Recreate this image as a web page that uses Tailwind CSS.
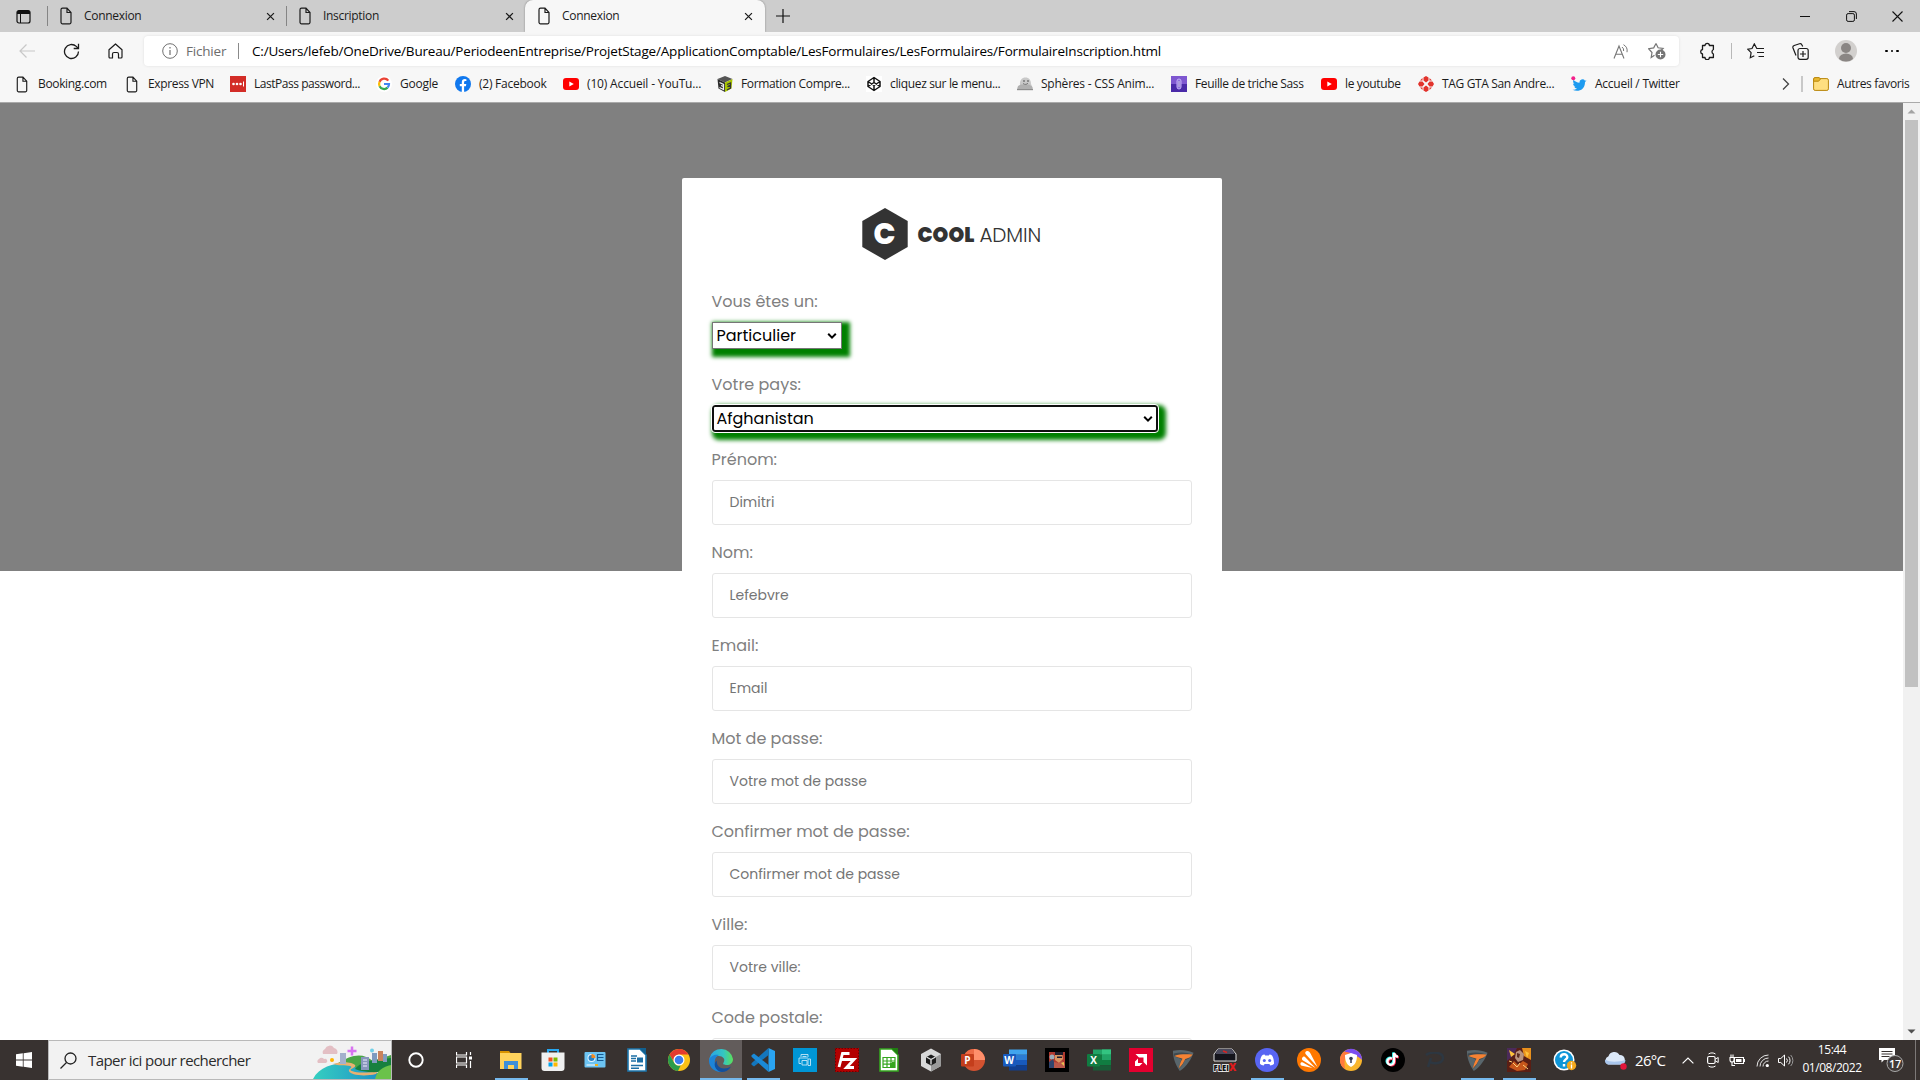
<!DOCTYPE html>
<html lang="fr">
<head>
<meta charset="utf-8">
<title>Connexion</title>
<script src="https://cdn.jsdelivr.net/npm/@tailwindcss/browser@4"></script>
</head>
<body class="w-[1920px] h-[1080px] overflow-hidden flex flex-col bg-white text-[12px] text-[#1b1b1b] font-['Segoe_UI','Open_Sans',sans-serif]">
<svg class="hidden">
  <defs>
    <symbol id="page" viewBox="0 0 12 18"><path d="M2.5 1.2H7l4 4.3v9.8a1.5 1.5 0 0 1-1.5 1.5h-7A1.5 1.5 0 0 1 1 15.300V2.700a1.500 1.500 0 0 1 1.500-1.500zM7 1.200v4.300h4" fill="none" stroke="#1b1b1b" stroke-width="1.2"/></symbol>
    <symbol id="close" viewBox="0 0 10 10"><path d="M1.200 1.200l7.600 7.600M8.800 1.200l-7.600 7.600" fill="none" stroke="#1b1b1b" stroke-width="1.400"/></symbol>
    <symbol id="yt" viewBox="0 0 16 12"><rect width="16" height="12" rx="3" fill="#f00"/><path d="M6.300 3.400v5.200L10.800 6z" fill="#fff"/></symbol>
    <symbol id="chev" viewBox="0 0 10 8"><path d="M1.200 1.800L5 5.600l3.800-3.800" fill="none" stroke="#000" stroke-width="2"/></symbol>
    <symbol id="wings" viewBox="0 0 24 24"><path d="M1 2c8-1.500 15-1 22.500 2C21 11 16 19 8.500 24 4 18 1 10 1 2z" fill="#59666c"/><path d="M2 5c7-2 14-1.500 20 1-2 4-4 5-8 6-1.500 4-3 6.500-6.500 9.500 1-4 1.500-7 3-10C8 10 5 9 2 8z" fill="#3f4a50"/><path d="M2.500 7.500c6-2 12-2 20-1.500-2 3-4.500 4-8 5-2 4-3.500 7-7 10 1-4.500 2-7.500 4-10.500-3-1.500-6-1.500-9-3z" fill="#f58233"/></symbol>
  </defs>
</svg>

<!-- Tab strip -->
<header class="h-8 bg-[#cdcdcd] flex items-end shrink-0">
  <div class="w-[47px] h-8 flex items-center justify-center">
    <svg class="w-[15px] h-[15px]" viewBox="0 0 15 15"><rect x="1" y="1.500" width="13" height="12.500" rx="2" fill="none" stroke="#111" stroke-width="1.200"/><path d="M1 3.500a2 2 0 0 1 2-2h9a2 2 0 0 1 2 2V5H1z" fill="#111"/><path d="M4.500 5v9" stroke="#111"/></svg>
  </div>
  <div class="w-[239px] h-8 flex items-center pl-3">
    <div class="w-px h-5 bg-[#858585] -ml-3 mr-3"></div>
    <svg class="w-3 h-[18px]"><use href="#page"/></svg>
    <span class="ml-3 flex-1 tracking-[-0.3px]">Connexion</span>
    <svg class="w-[9px] h-[9px] mr-[11px]"><use href="#close"/></svg>
  </div>
  <div class="w-[239px] h-8 flex items-center pl-3">
    <div class="w-px h-5 bg-[#858585] -ml-3 mr-3"></div>
    <svg class="w-3 h-[18px]"><use href="#page"/></svg>
    <span class="ml-3 flex-1 tracking-[-0.3px]">Inscription</span>
    <svg class="w-[9px] h-[9px] mr-[11px]"><use href="#close"/></svg>
  </div>
  <div class="w-[240px] h-8 flex items-center pl-[13px] bg-[#f7f7f7] rounded-t-lg shadow-[0_0_2px_rgba(0,0,0,.4)]">
    <svg class="w-3 h-[18px]"><use href="#page"/></svg>
    <span class="ml-3 flex-1 tracking-[-0.3px]">Connexion</span>
    <svg class="w-[9px] h-[9px] mr-3"><use href="#close"/></svg>
  </div>
  <div class="w-[35px] h-8 flex items-center justify-center">
    <svg class="w-[14px] h-[14px]" viewBox="0 0 14 14"><path d="M7 0v14M0 7h14" stroke="#111" stroke-width="1.200"/></svg>
  </div>
  <div class="flex-1"></div>
  <div class="w-[46px] h-8 flex items-center justify-center"><svg class="w-[10px] h-[10px]" viewBox="0 0 10 10"><path d="M0 5.500h10" stroke="#111"/></svg></div>
  <div class="w-[46px] h-8 flex items-center justify-center"><svg class="w-[11px] h-[11px]" viewBox="0 0 11 11"><rect x=".6" y="2.600" width="7.800" height="7.800" rx="1.500" fill="none" stroke="#111"/><path d="M3 .6h5a2.400 2.400 0 0 1 2.400 2.400v5" fill="none" stroke="#111"/></svg></div>
  <div class="w-[46px] h-8 flex items-center justify-center"><svg class="w-[11px] h-[11px]" viewBox="0 0 11 11"><path d="M.5.500l10 10M10.500.500l-10 10" stroke="#111" stroke-width="1.100"/></svg></div>
</header>

<!-- Toolbar -->
<nav class="relative h-[34px] pt-1 pl-[5px] bg-[#f7f7f7] flex items-center shrink-0">
  <div class="w-11 flex justify-center"><svg class="w-4 h-[14px]" viewBox="0 0 16 14"><path d="M16 7H1M7.500.500L1 7l6.500 6.500" fill="none" stroke="#c8c8c8" stroke-width="1.200"/></svg></div>
  <div class="w-11 flex justify-center"><svg class="w-[17px] h-[17px]" viewBox="0 0 17 17"><path d="M15.500 8.500a7 7 0 1 1-2.200-5.100l2 2M15.500.800v4.700h-4.800" fill="none" stroke="#1b1b1b" stroke-width="1.300"/></svg></div>
  <div class="w-11 flex justify-center"><svg class="w-[15px] h-4" viewBox="0 0 15 16"><path d="M1 6.800L7.500 1 14 6.800v7.200a1 1 0 0 1-1 1h-2.500v-4a1.500 1.500 0 0 0-1.500-1.500H6A1.500 1.500 0 0 0 4.500 11v4H2a1 1 0 0 1-1-1z" fill="none" stroke="#1b1b1b" stroke-width="1.200" stroke-linejoin="round"/></svg></div>
  <div class="ml-[7px] w-[1535px] h-[30px] bg-white rounded shadow-[0_0_3px_rgba(0,0,0,.1)] flex items-center pl-[18px]">
    <svg class="w-4 h-4" viewBox="0 0 16 16"><circle cx="8" cy="8" r="7.300" fill="none" stroke="#707070"/><path d="M8 7v5M8 4v1.500" stroke="#707070" stroke-width="1.200"/></svg>
    <span class="ml-2 w-[52px] text-[13.500px] text-[#6d6d6d] tracking-[-0.2px]">Fichier</span>
    <div class="w-px h-4 bg-[#8a8a8a]"></div>
    <span class="ml-[13px] flex-1 text-[13.500px] text-black whitespace-nowrap tracking-[-0.190px]">C:/Users/lefeb/OneDrive/Bureau/PeriodeenEntreprise/ProjetStage/ApplicationComptable/LesFormulaires/LesFormulaires/FormulaireInscription.html</span>
    <svg class="w-4 h-[15px] mr-[19px]" viewBox="0 0 16 15"><path d="M1 14.500L6 2l5 12.500M2.700 10.200h6.600" fill="none" stroke="#767676" stroke-width="1.100"/><path d="M9 3a4 4 0 0 1 1.600 4M10.500.700a7 7 0 0 1 3.500 7.500" fill="none" stroke="#767676"/></svg>
    <svg class="w-[18px] h-[18px] mr-[13px]" viewBox="0 0 18 18"><path d="M8 1.500l2.100 4.300 5 .7-3.500 3.300M6.500 13.200L3.200 15.500l.8-5L.6 6.700l5.100-.8L8 1.500" fill="none" stroke="#767676" stroke-width="1.200"/><circle cx="12.500" cy="12.500" r="5" fill="#767676"/><path d="M12.500 9.800v5.400M9.800 12.500h5.400" stroke="#fff" stroke-width="1.100"/></svg>
  </div>
  <div class="ml-1 w-12 flex justify-center"><svg class="w-[17px] h-[18px]" viewBox="0 0 17 18"><path d="M3.500 3.500H6a2.200 2.200 0 0 1 4.400 0h4v4a2.500 2.500 0 0 0 0 4.500v3.500h-4a2.200 2.200 0 0 1-4.400 0H3.500V12a2.300 2.300 0 0 1 0-4.500z" fill="none" stroke="#1b1b1b" stroke-width="1.300" stroke-linejoin="round"/></svg></div>
  <div class="w-px h-4 bg-[#b8b8b8]"></div>
  <div class="w-12 flex justify-center"><svg class="w-[18px] h-4" viewBox="0 0 18 16"><path d="M13 5.500H9.800L7.300.9 5 5.500.8 6.200l3.300 3.500-.8 5 4-2M10 5.500h7M10 9.500h7M11.500 13.500h5.500" fill="none" stroke="#1b1b1b" stroke-width="1.200"/></svg></div>
  <div class="w-10 mr-0.5 flex justify-center"><svg class="w-[17px] h-[17px]" viewBox="0 0 17 17"><rect x="6" y="5.500" width="10.200" height="10.800" rx="2" fill="#f7f7f7" stroke="#1b1b1b" stroke-width="1.200"/><path d="M11 8v6M8 11h6M4 12.500L1 5a2 2 0 0 1 1.200-2.500L7.500.800A2 2 0 0 1 10 2l.7 1.500" fill="none" stroke="#1b1b1b" stroke-width="1.200"/></svg></div>
  <div class="w-12 flex justify-center"><svg class="w-[22px] h-[22px]" viewBox="0 0 22 22"><circle cx="11" cy="11" r="11" fill="#d2d0ce"/><circle cx="11" cy="8" r="5" fill="#8a8684"/><path d="M4 19a7 5.500 0 0 1 14 0 11 11 0 0 1-14 0z" fill="#8a8684"/></svg></div>
  <div class="w-11 flex justify-center gap-[3px]"><i class="w-[2.500px] h-[2.500px] rounded-full bg-black"></i><i class="w-[2.500px] h-[2.500px] rounded-full bg-black"></i><i class="w-[2.500px] h-[2.500px] rounded-full bg-black"></i></div>
</nav>

<!-- Favourites bar -->
<nav class="h-[37px] border-b border-[#aaa] bg-[#f7f7f7] pl-[14px] flex items-center whitespace-nowrap shrink-0 tracking-[-0.35px]">
  <a class="w-[110px] flex items-center"><svg class="ml-0.5 mr-2.5 w-3 h-[17px]"><use href="#page"/></svg>Booking.com</a>
  <a class="w-[106px] flex items-center"><svg class="ml-0.5 mr-2.5 w-3 h-[17px]"><use href="#page"/></svg>Express VPN</a>
  <a class="w-[146px] flex items-center gap-2 tracking-[-0.460px]"><svg class="w-4 h-4" viewBox="0 0 16 16"><path fill="#d32d27" d="M0 0h16v16H0z"/><circle cx="3.500" cy="8" r="1.300" fill="#fff"/><circle cx="7" cy="8" r="1.300" fill="#fff"/><circle cx="10.500" cy="8" r="1.300" fill="#fff"/><path d="M13.500 5.500v5" stroke="#fff"/></svg>LastPass password...</a>
  <a class="w-[79px] flex items-center gap-2 tracking-[-0.250px]"><svg class="w-4 h-4" viewBox="0 0 16 16"><rect width="16" height="16" rx="8" fill="#fff"/><g fill="none" stroke-width="2.200"><path d="M12.300 4.600A5 5 0 0 0 3.600 5.800" stroke="#ea4335"/><path d="M3.600 5.800a5 5 0 0 0 0 4.400" stroke="#fbbc05"/><path d="M3.600 10.200a5 5 0 0 0 8 1.400" stroke="#34a853"/><path d="M11.600 11.600A5 5 0 0 0 13 8H8" stroke="#4285f4"/></g></svg>Google</a>
  <a class="w-[108px] flex items-center gap-2 tracking-[-0.250px]"><svg class="w-4 h-4" viewBox="0 0 16 16"><circle cx="8" cy="8" r="8" fill="#1078ee"/><path d="M6.800 16v-5.800H4.800V8h2V6.200c0-2 1.200-3.100 3-3.100l1.600.1v1.900h-1c-1 0-1.300.6-1.300 1.200V8h2.200l-.4 2.200H9.100V16z" fill="#fff"/></svg>(2) Facebook</a>
  <a class="w-[154px] flex items-center gap-2 tracking-[-0.160px]"><svg class="w-4 h-3"><use href="#yt"/></svg>(10) Accueil - YouTu...</a>
  <a class="w-[149px] flex items-center gap-2"><svg class="w-4 h-4" viewBox="0 0 16 16"><path d="M8 0l7.500 3L8 6.500.500 3z" fill="#555"/><path d="M.5 3L8 6.500V16L1.500 12.500z" fill="#2b2b2b"/><path d="M15.500 3L8 6.500V16l6.500-3.500z" fill="#a8c400"/><path d="M2.500 6.500L6.500 8.500v2L4 9.500M6.500 10.500v3L2.500 11.500" fill="none" stroke="#eee" stroke-width="1.300"/><path d="M10 8.500L13.500 7v2.200l-3 1.500 3-.5v2l-3.500 1.800" fill="none" stroke="#333" stroke-width="1.300"/></svg>Formation Compre...</a>
  <a class="w-[151px] flex items-center gap-2"><svg class="w-4 h-4 bg-white" viewBox="0 0 16 16"><path d="M8 1.500l6 4v5l-6 4-6-4v-5zM2 5.500l6 4 6-4M2 10.500l6-4 6 4M8 1.500v5M8 9.500v5" fill="none" stroke="#111" stroke-width="1.500" stroke-linejoin="round"/></svg>cliquez sur le menu...</a>
  <a class="w-[154px] flex items-center gap-2 tracking-[-0.220px]"><svg class="w-4 h-4" viewBox="0 0 16 16"><path d="M3 9C2.500 4 5 1.500 8.500 1.500S14 4 14 8l2 4.500H0z" fill="#c9c9c9"/><path d="M1 10l3-1.500h8l3 2 1 3.500H0z" fill="#b0b0b0"/><path d="M0 13h16v1.200H0z" fill="#8d8d8d"/><circle cx="7" cy="5" r="1" fill="#777"/><circle cx="11" cy="5" r="1" fill="#777"/><path d="M6 7.500c2 1.500 4 1 5-.5" stroke="#777" fill="none"/></svg>Sphères - CSS Anim...</a>
  <a class="w-[150px] flex items-center gap-2"><svg class="w-4 h-4" viewBox="0 0 16 16"><path fill="#7e57d0" d="M0 0h16v16H0z"/><path fill="#4a2aa8" d="M0 8h16v8H0z"/><rect x="6" y="3" width="4" height="10" rx="2" fill="#8d70dc" stroke="#c4b0f5"/><path d="M8 5v6" stroke="#ddd" stroke-width=".8"/></svg>Feuille de triche Sass</a>
  <a class="w-[97px] flex items-center gap-2"><svg class="w-4 h-3"><use href="#yt"/></svg>le youtube</a>
  <a class="w-[153px] flex items-center gap-2"><svg class="w-4 h-4" viewBox="0 0 16 16"><g fill="#e2332c"><path d="M8 0l2.500 1.500v3L8 6.500 5.500 4.500v-3zM8 16l2.500-1.500v-3L8 9.500l-2.500 2v3zM0 8l1.500-2.500h3L6.500 8l-2 2.500h-3zM16 8l-1.500-2.500h-3L9.500 8l2 2.500h3zM2 4.500L4.500 2v2.500zM14 4.500L11.500 2v2.500zM2 11.500L4.500 14v-2.500zM14 11.500L11.500 14v-2.500z"/></g></svg>TAG GTA San Andre...</a>
  <a class="flex-1 flex items-center gap-2 tracking-[-0.250px]"><svg class="w-4 h-4" viewBox="0 0 16 16"><path d="M15.500 4.200l-1.500.6a3 3 0 0 0-5.500 2C6 6.700 4 5.500 2.500 3.800c-.8 1.500-.3 3.200.9 4.100L2 7.500c.1 1.500 1.100 2.600 2.500 3H3.200c.4 1.200 1.500 1.900 2.800 2-1.400 1-3 1.300-4.500 1.200 5.500 3 12.500 0 12.500-7.500z" fill="#1d9bf0"/><circle cx="2.300" cy="2.300" r="2" fill="#f4218b"/></svg>Accueil / Twitter</a>
  <svg class="w-2 h-3 mr-[11px]" viewBox="0 0 8 12"><path d="M1 .5L6.500 6 1 11.500" fill="none" stroke="#444" stroke-width="1.300"/></svg>
  <div class="w-0.5 h-4 bg-[#c8c8c8] mr-2.5"></div>
  <svg class="w-4 h-[14px] mr-2" viewBox="0 0 16 14"><rect x=".6" y="1.600" width="14.800" height="11.800" rx="1.500" fill="#ffdf80" stroke="#b8860b"/><path d="M.6 4.200h5L7.500 2 6.300.600H2A1.400 1.400 0 0 0 .6 2z" fill="#e8b831" stroke="#b8860b"/></svg>
  <span class="w-[83px]">Autres favoris</span>
</nav>

<!-- Page -->
<div class="h-[937px] flex shrink-0">
  <main class="w-[1903px] overflow-hidden bg-[linear-gradient(#808080_468px,#fff_468px)] font-['Poppins','Inter',sans-serif] text-[#808080] text-[16px] leading-6">
    <form class="mx-auto mt-[75px] w-[540px] h-[900px] bg-white rounded-t-[2px] p-[30px]">
      <div class="h-[52px] mb-[30px] pl-[150px] flex items-center text-[#333]">
        <div class="relative w-[46px] h-[52px] flex items-center justify-center mr-[10px]">
          <svg class="absolute inset-0 w-[46px] h-[52px]" viewBox="0 0 46 52"><path d="M23 0l22.700 13v26L23 52 .3 39V13z" fill="#333"/></svg>
          <span class="relative text-white font-extrabold text-[29px]">C</span>
        </div>
        <span class="font-black text-[20px] tracking-[0.050px] pt-0.5">COOL</span>
        <span class="ml-[5px] text-[20px] tracking-[-0.1px] font-light pt-0.5">ADMIN</span>
      </div>
      <div>Vous êtes un:</div>
      <div class="mt-2 w-[130px] h-[27px] border border-[#767676] bg-white shadow-[4px_4px_4px_4px_green] pl-1 pr-1 flex items-center justify-between text-black"><span>Particulier</span><svg class="w-2.5 h-2"><use href="#chev"/></svg></div>
      <div class="mt-6">Votre pays:</div>
      <div class="mt-2 w-[446px] h-[27px] border-2 border-[#101010] rounded-[3px] outline outline-white bg-white shadow-[4px_4px_4px_4px_green] pl-[3px] pr-[3px] flex items-center justify-between text-black"><span>Afghanistan</span><svg class="w-2.5 h-2"><use href="#chev"/></svg></div>
      <div class="mt-4">Prénom:</div>
      <div class="mt-2 h-[45px] border border-[#e5e5e5] rounded-[3px] pl-[17px] pb-0.5 flex items-center text-[14px] text-[#757575]">Dimitri</div>
      <div class="mt-4">Nom:</div>
      <div class="mt-2 h-[45px] border border-[#e5e5e5] rounded-[3px] pl-[17px] pb-0.5 flex items-center text-[14px] text-[#757575]">Lefebvre</div>
      <div class="mt-4">Email:</div>
      <div class="mt-2 h-[45px] border border-[#e5e5e5] rounded-[3px] pl-[17px] pb-0.5 flex items-center text-[14px] text-[#757575]">Email</div>
      <div class="mt-4">Mot de passe:</div>
      <div class="mt-2 h-[45px] border border-[#e5e5e5] rounded-[3px] pl-[17px] pb-0.5 flex items-center text-[14px] text-[#757575]">Votre mot de passe</div>
      <div class="mt-4">Confirmer mot de passe:</div>
      <div class="mt-2 h-[45px] border border-[#e5e5e5] rounded-[3px] pl-[17px] pb-0.5 flex items-center text-[14px] text-[#757575]">Confirmer mot de passe</div>
      <div class="mt-4">Ville:</div>
      <div class="mt-2 h-[45px] border border-[#e5e5e5] rounded-[3px] pl-[17px] pb-0.5 flex items-center text-[14px] text-[#757575]">Votre ville:</div>
      <div class="mt-4">Code postale:</div>
      <div class="mt-2 h-[45px] border border-[#e5e5e5] rounded-[3px]"></div>
    </form>
  </main>
  <aside class="w-[17px] bg-[#f1f1f1] flex flex-col items-center">
    <svg class="w-[17px] h-[17px]" viewBox="0 0 17 17"><path d="M8.500 6.500l4 4h-8z" fill="#a3a3a3"/></svg>
    <div class="w-[13px] h-[567px] bg-[#c1c1c1]"></div>
    <div class="flex-1"></div>
    <svg class="w-[17px] h-[17px]" viewBox="0 0 17 17"><path d="M8.500 10.500l4-4h-8z" fill="#505050"/></svg>
  </aside>
</div>

<!-- Taskbar -->
<footer class="h-10 bg-[#383230] flex items-center shrink-0 text-white">
  <div class="w-12 flex justify-center"><svg class="w-4 h-4" viewBox="0 0 16 16"><path d="M0 2.300L6.800 1.300v6.300H0zM7.600 1.200L16 0v7.600H7.600zM0 8.400h6.800v6.300L0 13.700zM7.600 8.400H16V16l-8.400-1.200z" fill="#fff"/></svg></div>
  <div class="w-[344px] h-10 bg-[#f2f2f2] border border-[#b9b9b9] flex items-center pl-[11px] text-[#2b2b2b] text-[15px]">
    <svg class="w-[17px] h-[17px] mr-[11px]" viewBox="0 0 17 17"><circle cx="10.500" cy="6.500" r="5.500" fill="none" stroke="#222" stroke-width="1.300"/><path d="M6.500 10.500L.5 16.500" stroke="#222" stroke-width="1.300"/></svg>
    <span class="flex-1 tracking-[-0.580px] whitespace-nowrap">Taper ici pour rechercher</span>
    <svg class="w-[78px] h-[38px]" viewBox="0 0 78 38">
      <defs><linearGradient id="sea"><stop stop-color="#35cfc0"/><stop offset="1" stop-color="#1b86c9"/></linearGradient></defs>
      <path d="M22 24C40 12 50 12 60 20l18-6v16H30z" fill="#4aa545"/>
      <path d="M0 38C6 26 20 22 34 22c8 6 20 8 44 12v4z" fill="url(#sea)"/>
      <path d="M20 23c8-3 20-2 22 1s-8 4-3 6 16 2 26 0l-2 3c-12 3-26 1-27-3-1-2 5-4 1-5s-12 0-17-2z" fill="#eab071"/>
      <path d="M42 28c4-6 14-9 36-11v12c-12 3-26 3-36-1z" fill="#17803f"/>
      <path d="M62 38c2-9 8-12 16-14v14z" fill="#6bc24a"/>
      <path fill="#a4b0cc" d="M27 12h6v11h-6z"/><path fill="#8796bb" d="M48 16h8v13h-8z"/><path d="M50 19h4M50 22h4M50 25h4" stroke="#eef"/>
      <path fill="#c9825c" d="M65 10h5v10h-5z"/><path fill="#7f9bc0" d="M59 12h5v10h-5zM70 13h4v8h-4z"/>
      <path d="M10 13a4 4 0 0 1 2-5 5 5 0 0 1 9-1 4 4 0 0 1 3 6zM5 22a2.500 2.500 0 0 1 1-4 3 3 0 0 1 5 0 2 2 0 0 1 2 4z" fill="#e3bfc4"/>
      <circle cx="19" cy="19" r="2" fill="#ffb300"/><circle cx="59" cy="9.500" r="2" fill="#6fd0e8"/><path d="M39 5.500v9M34.500 10h9" stroke="#d873f0" stroke-width="2.500"/>
    </svg>
  </div>
  <div class="w-12 flex justify-center"><svg class="w-4 h-4" viewBox="0 0 16 16"><circle cx="8" cy="8" r="6.700" fill="none" stroke="#fff" stroke-width="1.900"/></svg></div>
  <div class="w-12 flex justify-center"><svg class="w-4 h-4" viewBox="0 0 16 16"><path d="M.5 0v3h10V0M.5 16v-3h10v3M.5 5h10v6H.5zM14.500 0v3M14.500 9v7" fill="none" stroke="#fff" stroke-width="1.200"/><path fill="#fff" d="M13 4.500h3v3h-3z"/></svg></div>
  <div class="flex h-10 items-stretch ml-0.5">
    <div class="w-[42px] relative flex items-center justify-center"><svg class="w-6 h-6" viewBox="0 0 24 24"><path d="M1 3h9l1.500 2H1z" fill="#d99400"/><path d="M1 5h21.500v16H1z" fill="#ffd35c"/><path d="M5 21v-8h14v8h-4v-4H9v4z" fill="#3e8fd8"/></svg><i class="absolute bottom-0 w-[33px] h-0.5 bg-[#76b9ed]"></i></div>
    <div class="w-[42px] flex items-center justify-center"><svg class="w-6 h-6" viewBox="0 0 24 24"><path d="M7 5V2h10v3" fill="none" stroke="#27a7f0" stroke-width="2"/><path d="M.5 4.500h23V20a3 3 0 0 1-3 3h-17a3 3 0 0 1-3-3z" fill="#f0f0f0"/><path fill="#f25022" d="M7.500 9.500h4v4h-4z"/><path fill="#7fba00" d="M12.500 9.500h4v4h-4z"/><path fill="#00a4ef" d="M7.500 14.500h4v4h-4z"/><path fill="#ffb900" d="M12.500 14.500h4v4h-4z"/></svg></div>
    <div class="w-[42px] flex items-center justify-center"><svg class="w-6 h-6" viewBox="0 0 24 24"><rect x="1.500" y="4" width="21" height="15.500" rx="1" fill="#6cc4f3"/><circle cx="8.500" cy="10" r="4" fill="#e9f6ff"/><circle cx="8.500" cy="10" r="3" fill="#2b83c6"/><path d="M8.500 10V6a4 4 0 0 1 4 4z" fill="#f08a24"/><path d="M14.500 6.500h6M14.500 9.500h6M14.500 12.500h6M14.500 6v7" stroke="#155a92" stroke-width="1.200"/><path d="M3.500 17h9" stroke="#fff"/><path d="M12 17h3" stroke="#f5b21a" stroke-width="2"/></svg></div>
    <div class="w-[42px] flex items-center justify-center"><svg class="w-6 h-6" viewBox="0 0 24 24"><path d="M3 1h12l6 6v16H3z" fill="#fff" stroke="#1d77ad" stroke-width="1.600"/><path d="M14 0h7v7z" fill="#12608f"/><path d="M6 8h6M6 10.500h5M6 13h5M6 17.500h12M6 20.200h8" stroke="#1d6fa5" stroke-width="1.500"/><path fill="#1d6fa5" d="M12 9.500h6v5h-6z"/></svg></div>
    <div class="w-[42px] flex items-center justify-center"><svg class="w-6 h-6" viewBox="0 0 24 24"><circle cx="12" cy="12" r="11" fill="#fbc116"/><path d="M2.500 6.500a11 11 0 0 1 19-.1H12A5.500 5.500 0 0 0 7 14z" fill="#e33b2e"/><path d="M2.500 6.500L7.300 15a5.500 5.500 0 0 0 6.500 2.200L11 23A11 11 0 0 1 2.500 6.500z" fill="#2a9c4b"/><circle cx="12" cy="12" r="5.500" fill="#fff"/><circle cx="12" cy="12" r="4.300" fill="#3a7cec"/></svg></div>
    <div class="w-[42px] bg-[#625c5b] relative flex items-center justify-center"><svg class="w-6 h-6" viewBox="0 0 24 24"><defs><linearGradient id="eg" x1="0" x2="1"><stop stop-color="#2aa4e8"/><stop offset=".6" stop-color="#35c6c0"/><stop offset="1" stop-color="#5be05a"/></linearGradient></defs><path d="M.5 10A12 12 0 0 1 24 11c0 4-3 6-6 6s-4.500-1-3.500-2.300C17 11 13.500 8 10 8S2 10 .5 14z" fill="url(#eg)"/><path d="M0 12c1-4 6-6 10-5-3 1-5 5-4 9s4 7 8 8C6 25-.5 19 0 12z" fill="#1d84d8"/><path d="M8 12.500c-1 4 2 8 7 8 3 0 5-1 7-2-2.500 4.500-7 6-11 5.300-5-2-7.500-8-3-11.300z" fill="#134f9c"/></svg><i class="absolute bottom-0 w-[42px] h-0.5 bg-[#76b9ed]"></i></div>
    <div class="w-[42px] relative flex items-center justify-center"><svg class="w-6 h-6" viewBox="0 0 24 24"><path d="M17.500 0v24L24 21V3z" fill="#2aa4f2"/><path d="M17.500 0v7L3 18.500.500 16.800v-1.600z" fill="#1376bd"/><path d="M17.500 24v-7L3 5.500.500 7.200v1.600z" fill="#1a8ad8"/></svg><i class="absolute bottom-0 w-[33px] h-0.5 bg-[#76b9ed]"></i></div>
    <div class="w-[42px] flex items-center justify-center"><svg class="w-6 h-6" viewBox="0 0 24 24"><path fill="#0096d6" d="M0 0h24v24H0z"/><path d="M8 9V6.500h7V9M8 15.500H6v-5.500h9M9 12.500h5v4.500H9zM15 11h2.500v6.500H15zM9.500 8.500h4" fill="none" stroke="#c4e8f8" stroke-width=".9"/></svg></div>
    <div class="w-[42px] flex items-center justify-center"><svg class="w-6 h-6" viewBox="0 0 24 24"><path fill="#b30000" d="M0 0h24v24H0z"/><path d="M.5.500h23v23H.5z" fill="none" stroke="#6d0000" stroke-dasharray="1.500"/><path d="M4 19L7.500 5.500h7M5.500 11.500h7M12 11.500h7l-7.500 8h7.500" fill="none" stroke="#fff" stroke-width="2.800"/></svg></div>
    <div class="w-[42px] flex items-center justify-center"><svg class="w-6 h-6" viewBox="0 0 24 24"><path d="M3 1h12l6 6v16H3z" fill="#fff" stroke="#35a61f" stroke-width="1.600"/><path d="M14 0h7v7z" fill="#1f7d10"/><path d="M6 9.500h12v10H6zM6 13h12M6 16.200h12M10 9.500v10M14 9.500v10" fill="none" stroke="#35a61f" stroke-width="1.200"/><path d="M13 19v-4h2v-1h3v5z" fill="#35a61f"/></svg></div>
    <div class="w-[42px] flex items-center justify-center"><svg class="w-6 h-6" viewBox="0 0 24 24"><path d="M12 .5l10 5.500v12l-10 5.500L2 18V6z" fill="#d8d8d8"/><path d="M12 12l10-6v12l-10 5.500z" fill="#9a9a9a"/><path d="M12 6.500l5 2.800v5.400l-5 2.800-5-2.800V9.300z" fill="#1c1c1c"/><path d="M12 11.500v5M12 11.500L7.500 9M12 11.500L16.500 9" stroke="#e5e5e5" stroke-width="1.300"/></svg></div>
    <div class="w-[42px] flex items-center justify-center"><svg class="w-6 h-6" viewBox="0 0 24 24"><circle cx="13" cy="12" r="11" fill="#d35230"/><path d="M13 1a11 11 0 0 1 11 11H13z" fill="#ff8f6b"/><path d="M13 1v11H2A11 11 0 0 1 13 1z" fill="#ed6c47"/><rect y="6" width="13" height="12.500" rx="1" fill="#c43e1c"/><text x="3.300" y="16" font-size="10" font-weight="700" fill="#fff">P</text></svg></div>
    <div class="w-[42px] flex items-center justify-center"><svg class="w-6 h-6" viewBox="0 0 24 24"><path fill="#41a5ee" d="M6 1.500h18v5.300H6z"/><path fill="#2b7cd3" d="M6 6.800h18v5.200H6z"/><path fill="#185abd" d="M6 12h18v5.200H6z"/><path fill="#103f91" d="M6 17.200h18v5.300H6z"/><rect y="6" width="13" height="12.500" rx="1" fill="#185abd"/><text x="1.300" y="16" font-size="10" font-weight="700" fill="#fff">W</text></svg></div>
    <div class="w-[42px] flex items-center justify-center"><svg class="w-6 h-6" viewBox="0 0 24 24"><path d="M0 0h24v24H0z"/><path fill="#b03a30" d="M4 4h16v16H4z"/><path d="M10 5h7l1 6-4 4-4-3z" fill="#d99561"/><path d="M10 4h8v3h-8zM12 8.500h5v1.500h-5z" fill="#1c1c2c"/><circle cx="7" cy="9" r="2.500" fill="#9cadb9"/><path d="M4 14l4-3 3 9H4z" fill="#31456e"/><path d="M9 14l5 1 3-2 3 3v4H9z" fill="#b9584a"/><path d="M16 15l3-1v4z" fill="#e8c050"/></svg></div>
    <div class="w-[42px] flex items-center justify-center"><svg class="w-6 h-6" viewBox="0 0 24 24"><path fill="#21a366" d="M6 1.500h18v5.300H6z"/><path fill="#33c481" d="M15 1.500h9v5.300h-9z"/><path fill="#107c41" d="M6 6.800h18v10.400H6z"/><path fill="#21a366" d="M15 6.800h9v5.200h-9z"/><path fill="#185c37" d="M6 17.200h18v5.300H6z"/><rect y="6" width="13" height="12.500" rx="1" fill="#107c41"/><text x="3.200" y="16" font-size="10" font-weight="700" fill="#fff">X</text></svg></div>
    <div class="w-[42px] flex items-center justify-center"><svg class="w-6 h-6" viewBox="0 0 24 24"><path fill="#e4002f" d="M0 0h24v24H0z"/><path d="M6.500 6H18v11.500L14.500 14V9.500H10zM9 10.500v4.500h4.500L10.500 18H6v-4.500z" fill="#fff"/></svg></div>
    <div class="w-[42px] flex items-center justify-center"><svg class="w-[22px] h-[22px]"><use href="#wings"/></svg></div>
    <div class="w-[42px] flex items-center justify-center"><svg class="w-[26px] h-8" viewBox="0 0 26 32"><path d="M6 5h14l4 5v7H2v-7z" fill="#15151c" stroke="#ddd"/><path d="M6 5h14l2.500 5h-19z" fill="#4a4a5c"/><path d="M11 7l4 1.500" stroke="#d22" stroke-width="1.500"/><text x="1.500" y="26.500" font-size="9" font-weight="800" textLength="15.500" lengthAdjust="spacingAndGlyphs" fill="#111" stroke="#fff" stroke-width="1.600" paint-order="stroke">FLEI</text><text x="17" y="26.500" font-size="10" font-weight="800" fill="#e21b1b">X</text></svg></div>
    <div class="w-[42px] relative flex items-center justify-center"><svg class="w-6 h-6" viewBox="0 0 24 24"><circle cx="12" cy="12" r="12" fill="#5865f2"/><path d="M8 6.800l1.600-.4.5 1h3.800l.5-1 1.600.4c1.800.8 3.200 5.200 3 9-1 1-2.300 1.500-3.700 1.700l-.9-1.500H9.600l-.9 1.500C7.300 17.300 6 16.800 5 15.800c-.2-3.800 1.200-8.200 3-9z" fill="#fff"/><circle cx="9.300" cy="12.500" r="1.500" fill="#5865f2"/><circle cx="14.700" cy="12.500" r="1.500" fill="#5865f2"/></svg><i class="absolute bottom-0 w-[33px] h-0.5 bg-[#76b9ed]"></i></div>
    <div class="w-[42px] flex items-center justify-center"><svg class="w-6 h-6" viewBox="0 0 24 24"><circle cx="12" cy="12" r="12" fill="#ff7800"/><path d="M9 3.500c2-1 3.500 0 4.500 2l7 13.500L9 6.500c-1-1-1-2.500 0-3zM6 9c-1.500 1-1.500 2.500 0 3.500L18.500 20 8.500 9.500C7.500 8.500 7 8.300 6 9zM4 14.500c-1 1-.8 2.800 1 3.200L15.500 20 6 14.500c-1-.5-1.500-.5-2 0z" fill="#fff"/></svg></div>
    <div class="w-[42px] flex items-center justify-center"><svg class="w-6 h-6" viewBox="0 0 24 24"><circle cx="12" cy="12" r="11" fill="#f9b52c"/><path d="M5 3.500A11 11 0 0 1 23 12c-4-5-12-6-18-8.500z" fill="#7a4df0"/><path d="M5 3.500C-1 8 0 18 6 21.200 5 14 5 8 12 5z" fill="#ff7a3c"/><path d="M12 5l6 2c0 6-1.500 9.500-6 12-4.500-2.500-6-6-6-12z" fill="#fff"/><circle cx="12" cy="10.500" r="1.800" fill="#333a55"/><path d="M12 11v4" stroke="#333a55" stroke-width="1.500"/></svg></div>
    <div class="w-[42px] flex items-center justify-center"><svg class="w-6 h-6" viewBox="0 0 24 24"><circle cx="12" cy="12" r="12" fill="#000"/><g fill="none" stroke-width="2.300"><path d="M11 10.500a3.300 3.300 0 1 0 2 3V5c.5 2 2 3.500 4 3.700" stroke="#25f4ee" transform="translate(-.8 -.6)"/><path d="M11 10.500a3.300 3.300 0 1 0 2 3V5c.5 2 2 3.500 4 3.700" stroke="#fe2c55" transform="translate(.8 .6)"/><path d="M11 10.500a3.300 3.300 0 1 0 2 3V5c.5 2 2 3.500 4 3.700" stroke="#fff"/></g></svg></div>
    <div class="w-[42px] flex items-center justify-center"><svg class="w-5 h-4" viewBox="0 0 20 16"><path d="M1 3c6-4 17-3 17 3S8 12 5 10M6 6l-3 9" fill="none" stroke="#2d3741" stroke-width="2.500"/></svg></div>
    <div class="w-[42px] relative flex items-center justify-center"><svg class="w-[22px] h-[22px]"><use href="#wings"/></svg><i class="absolute bottom-0 w-[33px] h-0.5 bg-[#76b9ed]"></i></div>
    <div class="w-[42px] relative flex items-center justify-center"><svg class="w-6 h-6" viewBox="0 0 24 24"><path fill="#5a1e14" d="M0 0h24v24H0z"/><path d="M0 0h10L6 8l-6 5z" fill="#4b2a5a"/><path d="M15 0h9v12l-7-4z" fill="#e8901c"/><path d="M2 2l6 4-4 3zM18 3l4 2-2 5z" fill="#ffc23c"/><path d="M9 4l4-2 4 4-1 6-5 2-3-4z" fill="#b9927e"/><path d="M10 5l3 1-1 4-2-1z" fill="#5b2b20"/><path d="M2 19l5-6 4 4 5-4 5 3-3 6-8 1z" fill="#c7561b"/><path d="M6 15l4 4 3-4M16 17l5 4M2 13l3 1" stroke="#ffd27a" fill="none"/></svg><i class="absolute bottom-0 w-[33px] h-0.5 bg-[#76b9ed]"></i></div>
    <div class="w-[42px] ml-1 flex items-center justify-center"><svg class="w-6 h-6" viewBox="0 0 24 24"><circle cx="11" cy="12" r="10.500" fill="#fff"/><circle cx="11" cy="12" r="9" fill="#0f96d8"/><path d="M7.700 9.500c.3-4.500 7-4 6.600-.2-.2 2-3.300 2.300-3.300 4.700M11 16v2.500" fill="none" stroke="#fff" stroke-width="2.400"/><circle cx="18.500" cy="17.500" r="4.700" fill="#f3a81c"/><path d="M18.500 16.500v4M18.500 14.200v1.300" stroke="#fff" stroke-width="1.300"/></svg></div>
  </div>
  <div class="flex-1"></div>
  <svg class="w-6 h-5 mr-[7px]" viewBox="0 0 24 20"><path d="M4 14.500a4.500 4.500 0 0 1 .5-8.300A6 6 0 0 1 15.500 5a5 5 0 0 1 2.500 9.500z" fill="#dbe8f8"/><path d="M4 14.500A4.500 4.500 0 0 1 1 9.500c5 3 13 2.500 20.500.5A5 5 0 0 1 18 14.500z" fill="#a9c6ec"/><circle cx="19.500" cy="16.500" r="3.200" fill="#e3153b"/></svg>
  <span class="w-[47px] text-[15px] tracking-[-0.700px] whitespace-nowrap">26°C</span>
  <svg class="w-3 h-[7px] mr-[13px]" viewBox="0 0 12 7"><path d="M.6 6.400L6 1l5.400 5.400" fill="none" stroke="#fff" stroke-width="1.200"/></svg>
  <svg class="w-3 h-4 mr-2.5" viewBox="0 0 12 16"><rect x=".6" y="4.500" width="7.500" height="7" rx="1.500" fill="none" stroke="#fff" stroke-width="1.200"/><path d="M8.500 7l2.700-1.500v5L8.500 9M1.500 2c2-1.500 5-1.500 7 0M1.500 14c2 1.500 5 1.500 7 0" fill="none" stroke="#fff"/></svg>
  <svg class="w-4 h-3 mr-[11px]" viewBox="0 0 16 12"><path d="M5.500 3.500h9v6h-9zM1 3.500h4v2.500a2 2 0 0 1-4 0zM2 .5v3M4 .5v3M3 8v3.500h3" fill="none" stroke="#fff" stroke-width="1.100"/><path fill="#fff" d="M7 5h5.500v3H7zM15 5h1v3h-1z"/></svg>
  <svg class="w-[13px] h-[13px] mr-[9px]" viewBox="0 0 13 13"><g fill="none" stroke="#e6e6e6"><path d="M1 12.500A11.500 11.500 0 0 1 12.500 1M4 12.500A8.500 8.500 0 0 1 12.500 4M7 12.500A5.500 5.500 0 0 1 12.500 7"/></g><circle cx="11.300" cy="11.500" r="1.600" fill="#fff"/></svg>
  <svg class="w-4 h-[13px] mr-[9px]" viewBox="0 0 16 13"><path d="M.5 4.500h2.300L6.500 1v11L2.800 8.500H.5zM8.500 4.500a3 3 0 0 1 0 4M10.500 2.700a5.500 5.500 0 0 1 0 7.600" fill="none" stroke="#fff"/><path d="M12.700 1a8 8 0 0 1 0 11" fill="none" stroke="#999"/></svg>
  <div class="w-[58px] flex flex-col items-center leading-[18px] pb-0.5 whitespace-nowrap tracking-[-0.450px] mr-[18px]"><span>15:44</span><span>01/08/2022</span></div>
  <div class="relative w-[25px] h-6 mr-[11px]">
    <svg class="w-[25px] h-6" viewBox="0 0 25 24"><path d="M0 0h16v12H5l-2.500 2.500V12H0z" fill="#fff"/><path d="M2.500 3.500h11M2.500 6h11M2.500 8.500h8" stroke="#383230"/><circle cx="16" cy="15.500" r="8" fill="#403a38" stroke="#aaa"/></svg>
    <span class="absolute left-[10px] top-[8px] text-[11px] leading-[15px] font-semibold tracking-tight">17</span>
  </div>
  <div class="w-px h-10 bg-[#7d7978] mr-1"></div>
</footer>
</body>
</html>
